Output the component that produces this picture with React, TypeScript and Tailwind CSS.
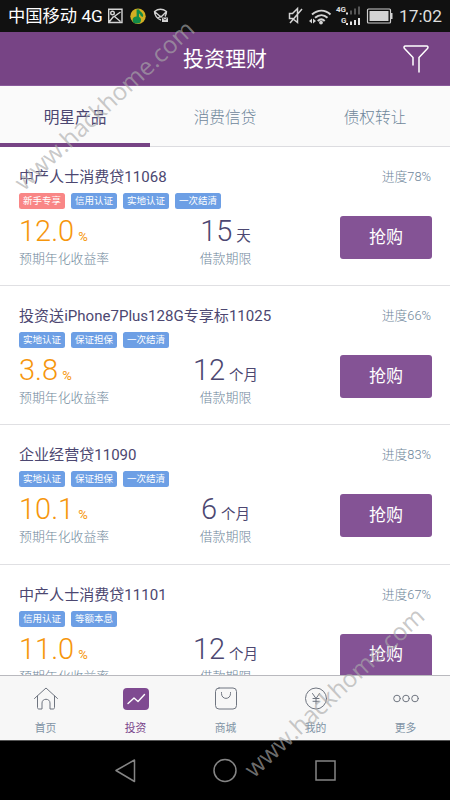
import type { ReactNode } from "react"

type Tag = { text: string; hot?: boolean }

type Product = {
  title: string
  progress: number
  tags: Tag[]
  rate: string
  term: string
  unit: string
}

const tabs = ["明星产品", "消费信贷", "债权转让"]

const products: Product[] = [
  {
    title: "中产人士消费贷11068",
    progress: 78,
    tags: [{ text: "新手专享", hot: true }, { text: "信用认证" }, { text: "实地认证" }, { text: "一次结清" }],
    rate: "12.0",
    term: "15",
    unit: "天",
  },
  {
    title: "投资送iPhone7Plus128G专享标11025",
    progress: 66,
    tags: [{ text: "实地认证" }, { text: "保证担保" }, { text: "一次结清" }],
    rate: "3.8",
    term: "12",
    unit: "个月",
  },
  {
    title: "企业经营贷11090",
    progress: 83,
    tags: [{ text: "实地认证" }, { text: "保证担保" }, { text: "一次结清" }],
    rate: "10.1",
    term: "6",
    unit: "个月",
  },
  {
    title: "中产人士消费贷11101",
    progress: 67,
    tags: [{ text: "信用认证" }, { text: "等额本息" }],
    rate: "11.0",
    term: "12",
    unit: "个月",
  },
]

function StatusBar() {
  return (
    <div className="flex h-8 shrink-0 items-center bg-[#111111] pl-2 pr-2 text-white">
      <span className="w-[99px] whitespace-nowrap text-[17.300px] leading-8">中国移动 4G</span>
      <svg width="62" height="16" viewBox="0 0 62 16" fill="none" stroke="#d4d4d4" strokeWidth="1.4">
        <path d="M1.700 1.200h13.300v13.300H1.700zM2.500 13.500l4-5M6.500 9l7-5M7.500 8.500l6 5" />
        <circle cx="5.500" cy="5" r="1.800" />
        <circle cx="31" cy="8.300" r="7.700" fill="#d2ae22" stroke="none" />
        <path d="M30.800 1.500v9.500M31 2c.5 3 5 3 3.800 6.500" stroke="#118a48" strokeWidth="2.400" />
        <ellipse cx="29.800" cy="12" rx="4.200" ry="3.500" fill="#118a48" stroke="none" />
        <path d="M54 12c-4-1-6.500-5-6.500-8.500 4-3 8-3 12 0 0 2-.5 3.500-1.500 5M48 4l6 5 5-5M51 10l3-2" />
        <path d="M55 9.500h6v4.500h-6z" fill="#d4d4d4" stroke="none" />
        <path d="M55.500 10l2.500 2 2.500-2" stroke="#333" strokeWidth=".8" />
      </svg>
      <svg className="ml-auto" width="105" height="24" viewBox="0 0 105 24" fill="none">
        <g stroke="#d4d4d4" strokeWidth="1.500">
          <path d="M1.500 9.500h3l5-5v14l-5-4h-3zM14 5L2 19" />
          <path d="M24 10.500c6-5 13-5 18.500 0M27 13.800c4-3.400 9-3.400 12.500 0M29.700 17c2.300-2 5-2 7 0" strokeWidth="2" />
        </g>
        <circle cx="33" cy="18.600" r="1.900" fill="#d4d4d4" />
        <path d="M21 17l3-2.500v5zM28 17l-3-2.500v5z" fill="#d4d4d4" />
        <text x="48" y="7.500" fontSize="8" fontWeight="700" fill="#e0e0e0" fontFamily="Roboto, sans-serif">4G</text>
        <text x="53" y="18.500" fontSize="8" fontWeight="700" fill="#e0e0e0" fontFamily="Roboto, sans-serif">G</text>
        <path d="M62 6.500h2v4h-2zM66 4.500h2v6h-2zM70 2.500h2v8h-2z" fill="#565656" />
        <path d="M58 8.500h2v2h-2zM58 19h2v2h-2zM62 17.500h2V21h-2zM66 16h2v5h-2zM70 14h2v7h-2z" fill="#e4e4e4" />
        <rect x="79.500" y="5" width="23" height="14" rx="1" stroke="#cecece" strokeWidth="1.200" />
        <rect x="81.500" y="7" width="19" height="10" fill="#d4d4d4" />
        <path d="M103 9h1.500v6H103z" fill="#d4d4d4" />
      </svg>
      <span className="ml-[6px] text-[17.300px] leading-8 text-[#dedede]">17:02</span>
    </div>
  )
}

function Header() {
  return (
    <header className="grid h-[54px] shrink-0 grid-cols-3 items-center border-b border-[#8a5a9b] bg-[#774485]">
      <h1 className="col-start-2 pt-px text-center text-[21px] leading-8 text-white">投资理财</h1>
      <svg className="mr-[20px] justify-self-end" width="28" height="30" viewBox="0 0 28 30" fill="none" stroke="#fff" strokeWidth="1.500" strokeLinejoin="round" strokeLinecap="round">
        <path d="M11 21v-7.500L2.500 4.500C1.500 3 2 2 3.500 2h21c1.500 0 2 1 1 2.500L17 13.500V28" />
      </svg>
    </header>
  )
}

function ProductRow({ product }: { product: Product }) {
  return (
    <li className="flex h-[139.200px] shrink-0 flex-col border-b border-[#e0e0e3] px-[19px] pt-5">
      <div className="flex items-center justify-between">
        <h2 className="text-[15.050px] leading-5 text-[#4c4771]">{product.title}</h2>
        <span className="text-[12.800px] font-light leading-5 text-[#6f879b]">进度{product.progress}%</span>
      </div>
      <div className="mt-[6px] flex gap-[6px]">
        {product.tags.map((tag) => (
          <span
            key={tag.text}
            className={`h-4 w-[46px] rounded-[2.500px] text-center text-[9.500px] leading-4 text-white ${tag.hot ? "bg-[#f98686]" : "bg-[#6d9fe5]"}`}
          >
            {tag.text}
          </span>
        ))}
      </div>
      <div className="flex">
        <div className="w-[153px]">
          <div className="flex h-10 items-baseline gap-1 text-[#f6960c]">
            <span className="text-[29px] font-light leading-[45px]">{product.rate}</span>
            <span className="text-[13px]">%</span>
          </div>
          <p className="text-[12.900px] font-light leading-5 text-[#6f879b]">预期年化收益率</p>
        </div>
        <div className="w-[107px] text-center">
          <div className="flex h-10 items-baseline justify-center gap-1 text-[#4c4771]">
            <span className="text-[29px] font-light leading-[45px]">{product.term}</span>
            <span className="text-[14.500px]">{product.unit}</span>
          </div>
          <p className="text-[12.900px] font-light leading-5 text-[#6f879b]">借款期限</p>
        </div>
        <button className="-mr-px ml-auto mt-[7px] h-[43px] w-[92px] rounded-[3px] bg-[#845395] text-[17px] text-white">抢购</button>
      </div>
    </li>
  )
}

function NavItem({ label, active, children }: { label: string; active?: boolean; children: ReactNode }) {
  return (
    <div className={`flex flex-1 flex-col items-center pt-[10px] ${active ? "text-[#7b468c]" : "text-[#7f93a5]"}`}>
      <svg className="relative left-[0.5px]" width="28" height="26" viewBox="0 0 28 26" fill="none" stroke="#6f7580" strokeWidth="1" strokeLinecap="round" strokeLinejoin="round">
        {children}
      </svg>
      <span className="ml-px mt-[9px] text-[10.800px] leading-4">{label}</span>
    </div>
  )
}

function BottomNav() {
  return (
    <nav className="flex h-[65px] shrink-0 border-t border-[#b9b9be] bg-[#f7f7f7]">
      <NavItem label="首页">
        <path d="M2.500 12.500L14 2l11.500 10.500M5.500 10v11.500c0 1 .5 1.500 1.500 1.500h3v-6c0-5 8-5 8 0v6h3c1 0 1.500-.5 1.500-1.500V10" />
      </NavItem>
      <NavItem label="投资" active>
        <rect x="1" y="2" width="26" height="22" rx="4" fill="#7f4a91" stroke="none" />
        <path d="M6 17.500l6-5.500 4 3.500 6.500-7" stroke="#fff" strokeWidth="1.400" />
      </NavItem>
      <NavItem label="商城">
        <rect x="3.500" y="2" width="21" height="21" rx="3.500" />
        <path d="M9.500 6.500v1c0 6.500 9 6.500 9 0v-1" />
      </NavItem>
      <NavItem label="我的">
        <circle cx="14" cy="12.500" r="10.500" />
        <path d="M10.500 7.500l3.500 5 3.500-5M14 12.500v5.500M11 12.500h6M11 15.300h6" />
      </NavItem>
      <NavItem label="更多">
        <circle cx="5" cy="12.500" r="3.300" />
        <circle cx="14" cy="12.500" r="3.300" />
        <circle cx="23" cy="12.500" r="3.300" />
      </NavItem>
    </nav>
  )
}

function SystemNav() {
  return (
    <div className="flex flex-1 items-center justify-center gap-[76px] border-t border-[#555] bg-black">
      <svg width="24" height="26" viewBox="0 0 24 26" fill="none" stroke="#858585" strokeWidth="1.500" strokeLinejoin="round">
        <path d="M21.500 2v21.500L3 12.500z" />
      </svg>
      <svg width="24" height="26" viewBox="0 0 24 26" fill="none" stroke="#858585" strokeWidth="1.500">
        <circle cx="12" cy="12.500" r="11" />
      </svg>
      <svg width="24" height="26" viewBox="0 0 24 26" fill="none" stroke="#858585" strokeWidth="1.500">
        <rect x="3" y="3" width="19" height="19" />
      </svg>
    </div>
  )
}

export default function App() {
  return (
    <div className="relative flex h-[800px] w-[450px] flex-col overflow-hidden bg-white font-[Roboto,'Noto_Sans_CJK_SC',sans-serif]">
      <StatusBar />
      <Header />
      <div className="flex h-[61px] shrink-0 border-b border-[#dcdce0] bg-[#fafafa]">
        {tabs.map((tab, i) => (
          <div
            key={tab}
            className={`h-[61px] flex-1 text-center text-[15.700px] leading-[63px] ${i === 0 ? "border-b-4 border-[#774485] text-[#4c4771]" : "font-light text-[#6f879b]"}`}
          >
            {tab}
          </div>
        ))}
      </div>
      <ul className="flex h-[528px] shrink-0 flex-col overflow-hidden">
        {products.map((product) => (
          <ProductRow key={product.title} product={product} />
        ))}
      </ul>
      <BottomNav />
      <SystemNav />
      <span className="pointer-events-none absolute left-[-21px] top-[89px] w-[250px] -rotate-43 text-center font-['Open_Sans',sans-serif] text-[24.200px] leading-8 text-[#aaaaaa]/65">
        www.hackhome.com
      </span>
      <span className="pointer-events-none absolute left-[209px] top-[676px] w-[250px] -rotate-43 text-center font-['Open_Sans',sans-serif] text-[24.200px] leading-8 text-[#aaaaaa]/65">
        www.hackhome.com
      </span>
    </div>
  )
}
